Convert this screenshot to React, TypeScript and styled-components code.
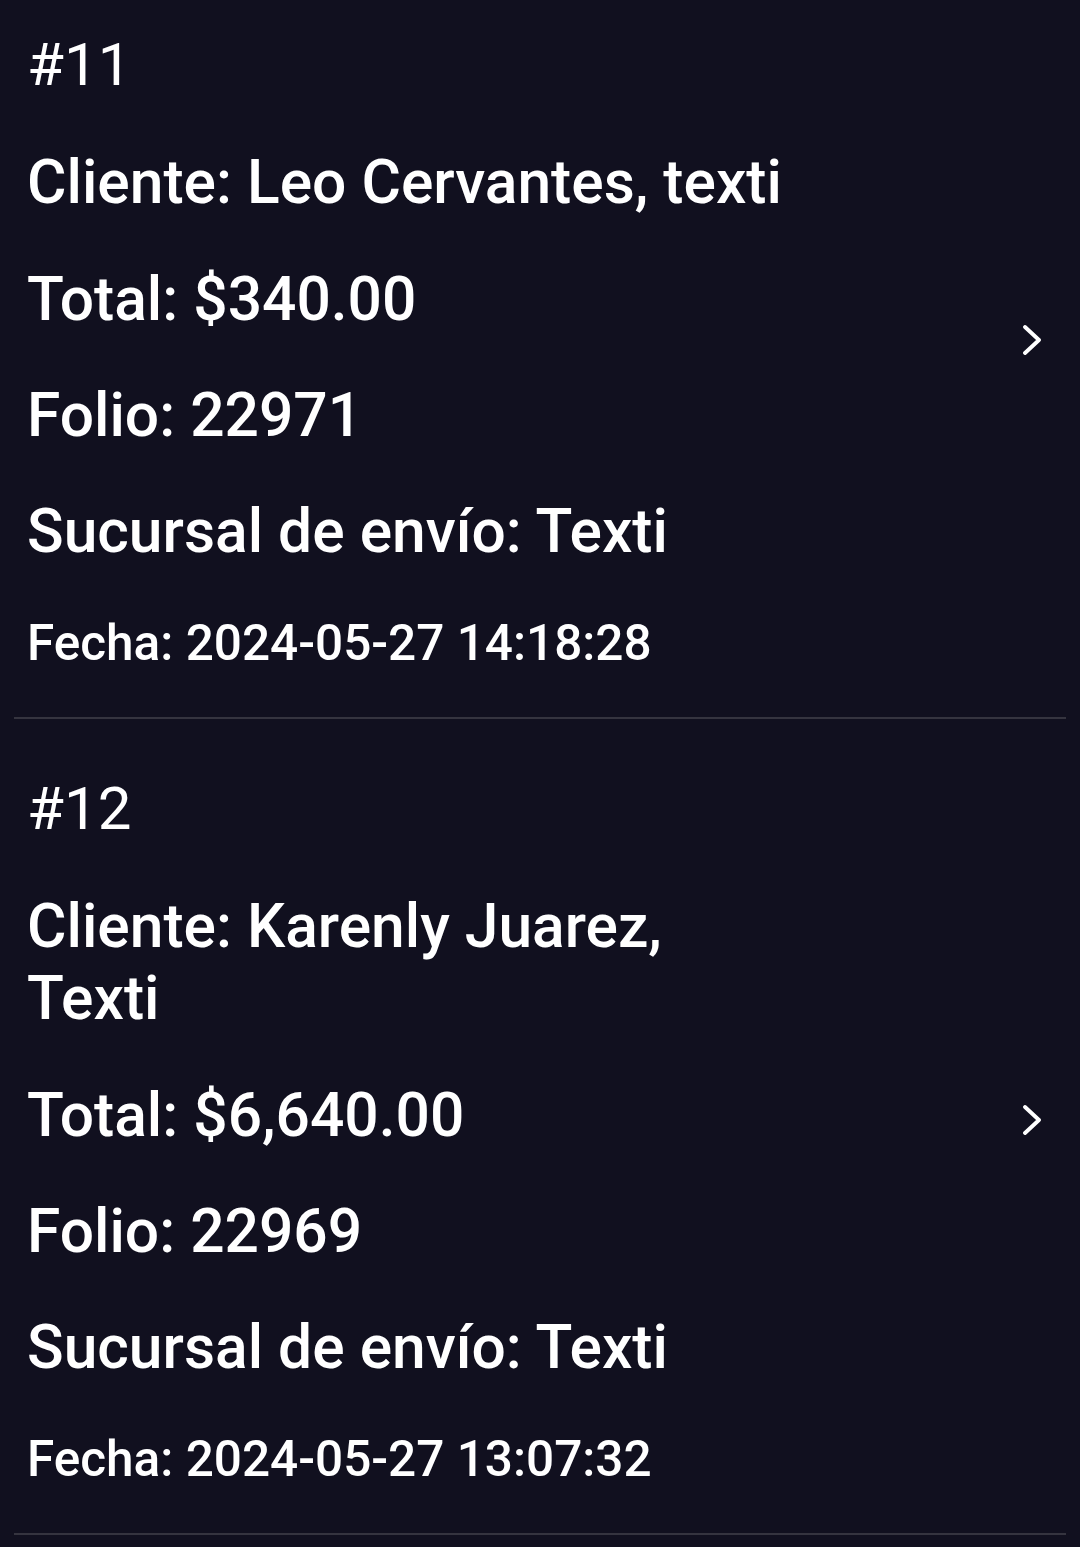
import React from "react";
import styled, { createGlobalStyle } from "styled-components";

const GlobalStyle = createGlobalStyle`
  html, body {
    margin: 0;
    padding: 0;
    background: #11101f;
  }
  body {
    font-family: Roboto, "Noto Sans", Arial, sans-serif;
    color: #ffffff;
    -webkit-font-smoothing: antialiased;
  }
`;

const Screen = styled.div`
  width: 1080px;
  height: 1547px;
  overflow: hidden;
  background: #11101f;
`;

/* the list is scrolled a little: the first item's top is above the screen */
const List = styled.div`
  margin-top: -25px;
  padding: 0 14px;
  display: flex;
  flex-direction: column;
`;

const Item = styled.div`
  display: flex;
  align-items: center;
  padding: 55px 0 45px 13px;
  border-bottom: 2px solid #35343f;
`;

const Body = styled.div`
  flex: 1;
  display: flex;
  flex-direction: column;
  min-width: 0;
`;

type Kind = "title" | "client" | "main" | "date";

const sizes: Record<Kind, { fs: number; lh: number; mt: number; fw: number }> = {
  title: { fs: 60, lh: 70, mt: 0, fw: 400 },
  client: { fs: 60.5, lh: 72, mt: 47, fw: 500 },
  main: { fs: 60.5, lh: 72, mt: 44, fw: 500 },
  date: { fs: 49.5, lh: 58, mt: 46, fw: 500 },
};

const Field = styled.div<{ $kind: Kind }>`
  font-size: ${(p) => sizes[p.$kind].fs}px;
  line-height: ${(p) => sizes[p.$kind].lh}px;
  font-weight: ${(p) => sizes[p.$kind].fw};
  margin-top: ${(p) => sizes[p.$kind].mt}px;
  max-width: 770px;
  color: #ffffff;
`;

const TotalField = styled(Field)`
  margin-top: 45px;
`;

const Chevron = styled.svg`
  flex: none;
  width: 18px;
  height: 30px;
  margin: 0 25px 23px 20px;
`;

type Order = {
  num: number;
  client: string;
  total: string;
  folio: string;
  branch: string;
  date: string;
};

const orders: Order[] = [
  {
    num: 11,
    client: "Leo Cervantes, texti",
    total: "$340.00",
    folio: "22971",
    branch: "Texti",
    date: "2024-05-27 14:18:28",
  },
  {
    num: 12,
    client: "Karenly Juarez, Texti",
    total: "$6,640.00",
    folio: "22969",
    branch: "Texti",
    date: "2024-05-27 13:07:32",
  },
];

const OrderRow: React.FC<{ o: Order }> = ({ o }) => (
  <Item>
    <Body>
      <Field $kind="title">#{o.num}</Field>
      <Field $kind="client">Cliente: {o.client}</Field>
      <TotalField $kind="main">Total: {o.total}</TotalField>
      <Field $kind="main">Folio: {o.folio}</Field>
      <Field $kind="main">Sucursal de envío: {o.branch}</Field>
      <Field $kind="date">Fecha: {o.date}</Field>
    </Body>
    <Chevron viewBox="0 0 18 30">
      <polyline
        points="2,2 16,15 2,28"
        fill="none"
        stroke="#ffffff"
        strokeWidth="3.8"
        strokeLinecap="round"
        strokeLinejoin="round"
      />
    </Chevron>
  </Item>
);

export default function App() {
  return (
    <>
      <GlobalStyle />
      <Screen>
        <List>
          {orders.map((o) => (
            <OrderRow key={o.num} o={o} />
          ))}
        </List>
      </Screen>
    </>
  );
}
